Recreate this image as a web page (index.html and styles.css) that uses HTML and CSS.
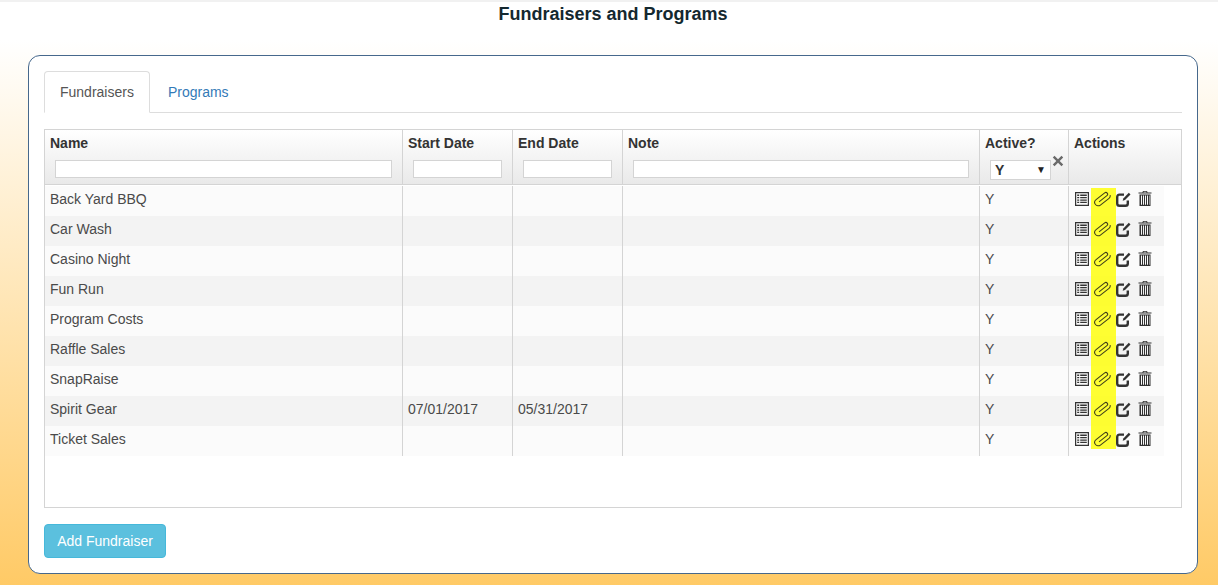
FILE: index.html
```html
<!DOCTYPE html>
<html lang="en">
<head>
<meta charset="utf-8">
<title>Fundraisers and Programs</title>
<link rel="stylesheet" href="styles.css">
</head>
<body>
<svg class="defs" width="0" height="0" aria-hidden="true">
  <defs>
    <symbol id="i-list" viewBox="0 0 14 14">
      <path fill-rule="evenodd" d="M0 0h14v14H0zM1.200 1.200v11.600h11.600V1.200z"/>
      <path d="M2.200 2.600h2v1.300h-2zM5.200 2.600h6.600v1.300H5.200zM2.200 5h2v1.300h-2zM5.200 5h6.600v1.300H5.200zM2.200 7.400h2v1.300h-2zM5.200 7.400h6.600v1.300H5.200zM2.200 9.800h2v1.300h-2zM5.200 9.800h6.600v1.300H5.200z"/>
    </symbol>
    <symbol id="i-clip" viewBox="0 0 20 20">
      <g transform="rotate(-38 10 10) translate(0 5)">
        <path fill="none" stroke="currentColor" stroke-width="1.100" d="M5 5.500H15.500a1.900 1.900 0 0 0 0-3.800H4a3.300 3.300 0 0 0 0 7.400H15.500a3.300 3.300 0 0 0 3-2"/>
      </g>
    </symbol>
    <symbol id="i-edit" viewBox="0 0 15 15">
      <path fill="none" stroke="currentColor" stroke-width="2.400" d="M8 2.600H3.500C2.100 2.600 1.200 3.700 1.200 5.100v6.400c0 1.400 .9 2.300 2.300 2.300h6c1.400 0 2.300-.9 2.300-2.300V8.500"/>
      <path d="M12.800 .8l1.700 1.700-5.500 5.600-2.300.6.600-2.300z"/>
    </symbol>
    <symbol id="i-trash" viewBox="0 0 14 15">
      <path fill-rule="evenodd" d="M5 0h4l.6 1.500H13.500v1.100H.5V1.500H4.400zM5.600 .8l-.2.7h3.200l-.2-.7z"/>
      <path fill-rule="evenodd" d="M1.500 3.400h11V15h-11zM3 4.600v9.200h1v-9.200zM5 4.600v9.200h1v-9.200zM7 4.600v9.200h1v-9.200zM9 4.600v9.200h1v-9.200zM11 4.600v9.200h.5v-9.200z"/>
    </symbol>
  </defs>
</svg>
<h1 class="page-title">Fundraisers and Programs</h1>
<main class="card">
  <nav class="tabs">
    <a class="tab tab-active">Fundraisers</a>
    <a class="tab">Programs</a>
  </nav>
  <section class="grid-box">
    <div class="grid-head">
      <div class="hcell"><span class="hlabel">Name</span><input class="filter" type="text"></div>
      <div class="hcell"><span class="hlabel">Start Date</span><input class="filter" type="text"></div>
      <div class="hcell"><span class="hlabel">End Date</span><input class="filter" type="text"></div>
      <div class="hcell"><span class="hlabel">Note</span><input class="filter" type="text"></div>
      <div class="hcell hcell-active"><span class="hlabel">Active?</span>
        <div class="select-wrap">
          <span class="select"><span>Y</span><span class="caret">▼</span></span>
          <svg class="clear" viewBox="0 0 12 12" width="12" height="12"><path d="M2.500 .8L6 4.300 9.500 .8l1.700 1.700L7.700 6l3.500 3.500-1.700 1.700L6 7.700 2.500 11.200.8 9.500 4.300 6 .8 2.500z"/></svg>
        </div>
      </div>
      <div class="hcell hcell-last"><span class="hlabel">Actions</span></div>
    </div>
    <div class="grid-body" id="rows">
      <div class="row"><div class="cell">Back Yard BBQ</div><div class="cell"></div><div class="cell"></div><div class="cell"></div><div class="cell">Y</div><div class="cell actions"><svg class="ic ic-list"><use href="#i-list"/></svg><span class="hl"><svg class="ic ic-clip"><use href="#i-clip"/></svg></span><svg class="ic ic-edit"><use href="#i-edit"/></svg><svg class="ic ic-trash"><use href="#i-trash"/></svg></div></div>
      <div class="row"><div class="cell">Car Wash</div><div class="cell"></div><div class="cell"></div><div class="cell"></div><div class="cell">Y</div><div class="cell actions"><svg class="ic ic-list"><use href="#i-list"/></svg><span class="hl"><svg class="ic ic-clip"><use href="#i-clip"/></svg></span><svg class="ic ic-edit"><use href="#i-edit"/></svg><svg class="ic ic-trash"><use href="#i-trash"/></svg></div></div>
      <div class="row"><div class="cell">Casino Night</div><div class="cell"></div><div class="cell"></div><div class="cell"></div><div class="cell">Y</div><div class="cell actions"><svg class="ic ic-list"><use href="#i-list"/></svg><span class="hl"><svg class="ic ic-clip"><use href="#i-clip"/></svg></span><svg class="ic ic-edit"><use href="#i-edit"/></svg><svg class="ic ic-trash"><use href="#i-trash"/></svg></div></div>
      <div class="row"><div class="cell">Fun Run</div><div class="cell"></div><div class="cell"></div><div class="cell"></div><div class="cell">Y</div><div class="cell actions"><svg class="ic ic-list"><use href="#i-list"/></svg><span class="hl"><svg class="ic ic-clip"><use href="#i-clip"/></svg></span><svg class="ic ic-edit"><use href="#i-edit"/></svg><svg class="ic ic-trash"><use href="#i-trash"/></svg></div></div>
      <div class="row"><div class="cell">Program Costs</div><div class="cell"></div><div class="cell"></div><div class="cell"></div><div class="cell">Y</div><div class="cell actions"><svg class="ic ic-list"><use href="#i-list"/></svg><span class="hl"><svg class="ic ic-clip"><use href="#i-clip"/></svg></span><svg class="ic ic-edit"><use href="#i-edit"/></svg><svg class="ic ic-trash"><use href="#i-trash"/></svg></div></div>
      <div class="row"><div class="cell">Raffle Sales</div><div class="cell"></div><div class="cell"></div><div class="cell"></div><div class="cell">Y</div><div class="cell actions"><svg class="ic ic-list"><use href="#i-list"/></svg><span class="hl"><svg class="ic ic-clip"><use href="#i-clip"/></svg></span><svg class="ic ic-edit"><use href="#i-edit"/></svg><svg class="ic ic-trash"><use href="#i-trash"/></svg></div></div>
      <div class="row"><div class="cell">SnapRaise</div><div class="cell"></div><div class="cell"></div><div class="cell"></div><div class="cell">Y</div><div class="cell actions"><svg class="ic ic-list"><use href="#i-list"/></svg><span class="hl"><svg class="ic ic-clip"><use href="#i-clip"/></svg></span><svg class="ic ic-edit"><use href="#i-edit"/></svg><svg class="ic ic-trash"><use href="#i-trash"/></svg></div></div>
      <div class="row"><div class="cell">Spirit Gear</div><div class="cell">07/01/2017</div><div class="cell">05/31/2017</div><div class="cell"></div><div class="cell">Y</div><div class="cell actions"><svg class="ic ic-list"><use href="#i-list"/></svg><span class="hl"><svg class="ic ic-clip"><use href="#i-clip"/></svg></span><svg class="ic ic-edit"><use href="#i-edit"/></svg><svg class="ic ic-trash"><use href="#i-trash"/></svg></div></div>
      <div class="row"><div class="cell">Ticket Sales</div><div class="cell"></div><div class="cell"></div><div class="cell"></div><div class="cell">Y</div><div class="cell actions"><svg class="ic ic-list"><use href="#i-list"/></svg><span class="hl"><svg class="ic ic-clip"><use href="#i-clip"/></svg></span><svg class="ic ic-edit"><use href="#i-edit"/></svg><svg class="ic ic-trash"><use href="#i-trash"/></svg></div></div>
    </div>
  </section>
  <button class="btn-add" type="button">Add Fundraiser</button>
</main>
</body>
</html>
```

FILE: styles.css
```css
* { box-sizing: border-box; }
html, body { height: 100%; }
body {
  margin: 0;
  padding-left: 8px;
  height: 585px;
  overflow: hidden;
  font-family: "Liberation Sans", Arial, sans-serif;
  font-size: 14px;
  line-height: 20px;
  color: #333;
  background: linear-gradient(to bottom, #fff 0, #fff 40px, #ffca66 585px);
  border-top: 2px solid #f1f1f1;
  display: flex;
  flex-direction: column;
  align-items: center;
}
.defs { position: absolute; }
.page-title {
  margin: 2px 0 0;
  height: 51px;
  font-size: 18px;
  line-height: 20px;
  font-weight: 700;
  color: #14282f;
  text-align: center;
}
.card {
  width: 1170px;
  height: 519px;
  padding: 15px;
  background: #fff;
  border: 1px solid #46688c;
  border-radius: 12px;
}
.tabs {
  display: flex;
  height: 42px;
  border-bottom: 1px solid #ddd;
}
.tab {
  height: 42px;
  padding: 10px 15px;
  margin-right: 2px;
  color: #337ab7;
  border: 1px solid transparent;
  border-radius: 4px 4px 0 0;
}
.tab-active {
  color: #555;
  background: #fff;
  border-color: #ddd #ddd #fff;
}
.grid-box {
  --cols: 358px 110px 110px 357px 89px;
  margin-top: 16px;
  height: 379px;
  border: 1px solid #d4d4d4;
}
.grid-head {
  display: grid;
  grid-template-columns: var(--cols) 1fr;
  height: 55px;
  border-bottom: 1px solid #d4d4d4;
  background: linear-gradient(to bottom, #fff, #e9e9e9);
}
.hcell {
  display: flex;
  flex-direction: column;
  padding: 3px 10px 0 5px;
  border-right: 1px solid #d4d4d4;
}
.hcell-last { border-right: 0; }
.hlabel {
  font-weight: 700;
  line-height: 20px;
  height: 27px;
}
.filter {
  display: block;
  height: 18px;
  margin: 0 0 0 5px;
  padding: 0;
  background: #fff;
  border: 1px solid #d4d4d4;
}
.hcell:nth-child(1) .filter, .hcell:nth-child(4) .filter { width: calc(100% - 5px); }
.hcell:nth-child(2) .filter, .hcell:nth-child(3) .filter { width: 89px; }
.select-wrap {
  display: flex;
  align-items: flex-start;
  margin-left: 5px;
}
.select {
  display: flex;
  align-items: center;
  justify-content: space-between;
  flex: none;
  width: 61px;
  height: 20px;
  padding: 0 4px 0 4px;
  font-weight: 700;
  background: #fff;
  border: 1px solid #d4d4d4;
}
.caret { font-size: 10px; color: #222; font-weight: 400; }
.clear {
  flex: none;
  margin: -5px 0 0 1px;
  fill: #6a6a6a;
}
.hcell-active { padding-right: 0; }
.grid-body { padding-top: 1px; }
.row {
  display: grid;
  grid-template-columns: var(--cols) 95px;
  width: 1119px;
  height: 30px;
  background: #fbfbfb;
}
.row:nth-child(even) { background: #f3f3f3; }
.cell {
  padding: 3px 5px 0;
  line-height: 20px;
  color: #4a4a4a;
  border-right: 1px solid #d4d4d4;
}
.actions {
  display: flex;
  align-items: stretch;
  padding: 0 0 0 5px;
  border-right: 0;
}
.ic {
  display: block;
  flex: none;
  fill: #333;
  color: #333;
  align-self: flex-start;
}
.ic-list { width: 14px; height: 14px; margin: 6px 2px 0 1px; }
.ic-edit { width: 15px; height: 15px; margin: 6px 7px 0 0; }
.ic-trash { width: 14px; height: 15px; margin-top: 5px; }
.ic-clip { width: 19px; height: 19px; margin: 3px 0 0 2px; color: #3f3f1a; }
.hl {
  display: block;
  flex: none;
  width: 25px;
  background: rgba(255, 255, 0, .8);
}
.row:first-child .hl { margin-top: 2px; }
.row:first-child .ic-clip { margin-top: 1px; }
.row:last-child .hl { margin-bottom: 7px; }
.btn-add {
  display: block;
  width: 122px;
  height: 34px;
  margin-top: 16px;
  padding: 0;
  font: inherit;
  color: #fff;
  background: #5bc0de;
  border: 1px solid #46b8da;
  border-radius: 4px;
}
```
